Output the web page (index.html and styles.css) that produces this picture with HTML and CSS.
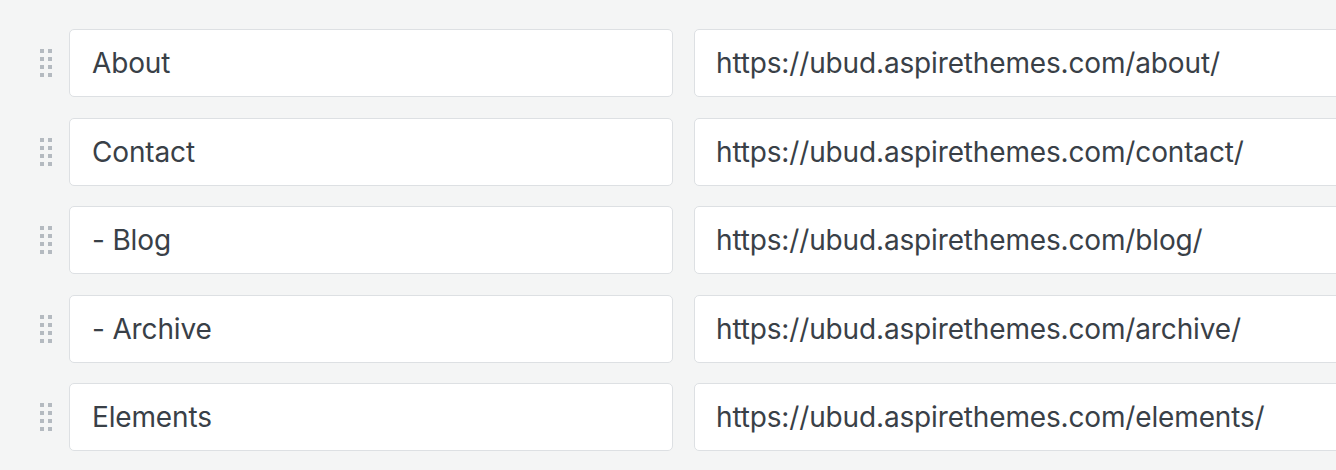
FILE: index.html
```html
<!DOCTYPE html>
<html>
<head>
<meta charset="utf-8">
<link rel="stylesheet" href="styles.css">
</head>
<body>
<div class="nav-list">
  <div class="nav-row">
    <span class="handle"><i></i><i></i><i></i><i></i><i></i><i></i><i></i><i></i></span>
    <div class="field label">About</div>
    <div class="field url">https://ubud.aspirethemes.com/about/</div>
  </div>
  <div class="nav-row">
    <span class="handle"><i></i><i></i><i></i><i></i><i></i><i></i><i></i><i></i></span>
    <div class="field label">Contact</div>
    <div class="field url">https://ubud.aspirethemes.com/contact/</div>
  </div>
  <div class="nav-row">
    <span class="handle"><i></i><i></i><i></i><i></i><i></i><i></i><i></i><i></i></span>
    <div class="field label">- Blog</div>
    <div class="field url">https://ubud.aspirethemes.com/blog/</div>
  </div>
  <div class="nav-row">
    <span class="handle"><i></i><i></i><i></i><i></i><i></i><i></i><i></i><i></i></span>
    <div class="field label">- Archive</div>
    <div class="field url">https://ubud.aspirethemes.com/archive/</div>
  </div>
  <div class="nav-row">
    <span class="handle"><i></i><i></i><i></i><i></i><i></i><i></i><i></i><i></i></span>
    <div class="field label">Elements</div>
    <div class="field url">https://ubud.aspirethemes.com/elements/</div>
  </div>
</div>
</body>
</html>
```
FILE: styles.css
```css
html, body {
  margin: 0;
  padding: 0;
  background: #f4f5f5;
  overflow: hidden;
}
body {
  font-family: Inter, "Noto Sans", sans-serif;
  color: #394047;
}
.nav-list {
  padding-top: 29px;
  display: flex;
  flex-direction: column;
  gap: 20.5px;
  width: 1400px;
}
.nav-row {
  display: flex;
  align-items: center;
  height: 68px;
}
.handle {
  width: 12px;
  margin-left: 40px;
  margin-right: 17px;
  display: grid;
  grid-template-columns: 4px 4px;
  column-gap: 4px;
  row-gap: 4px;
}
.handle i {
  display: block;
  width: 4px;
  height: 4px;
  background: #b4bac0;
}
.field {
  box-sizing: border-box;
  height: 68px;
  background: #fff;
  border: 1.5px solid #dde0e3;
  border-radius: 5px;
  display: flex;
  align-items: center;
  font-size: 28px;
  letter-spacing: -0.15px;
}
.label {
  width: 604px;
  padding-left: 22px;
  margin-right: 21px;
}
.url {
  width: 700px;
  padding-left: 21px;
}
```
